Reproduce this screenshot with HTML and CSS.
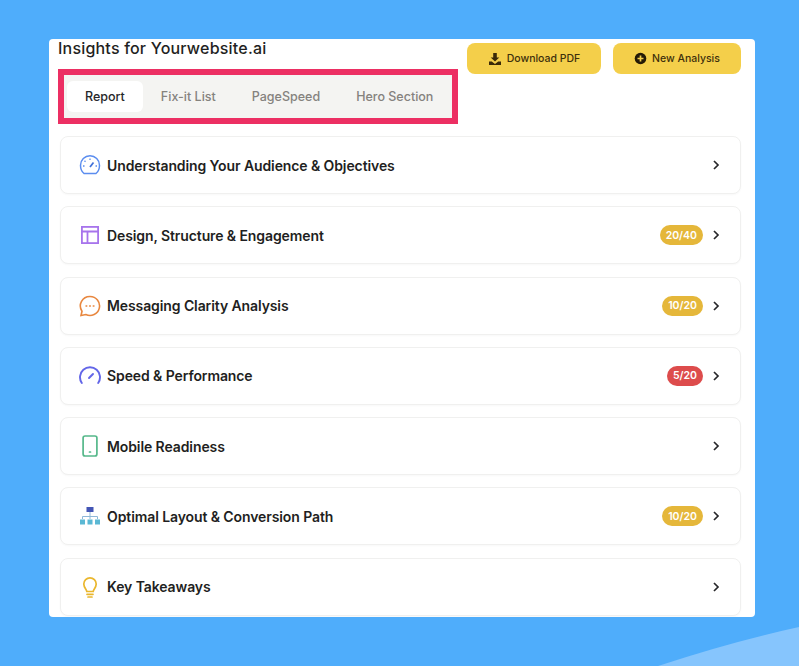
FILE: index.html
```html
<!DOCTYPE html>
<html lang="en">
<head>
<meta charset="utf-8">
<title>Insights for Yourwebsite.ai</title>
<link rel="stylesheet" href="styles.css">
</head>
<body>
<svg class="corner" width="799" height="666" viewBox="0 0 799 666" aria-hidden="true"><path d="M658 666 Q730 642 799 627 V666 Z" fill="#86c5fd"/></svg>
<main class="panel">
  <header class="top">
    <div class="top-left">
      <h1 class="title">Insights for Yourwebsite.ai</h1>
      <nav class="tabs">
        <span class="tab tab-active">Report</span>
        <span class="tab">Fix-it List</span>
        <span class="tab">PageSpeed</span>
        <span class="tab">Hero Section</span>
      </nav>
    </div>
    <div class="actions">
      <button class="btn btn-pdf">
        <svg width="14" height="14" viewBox="0 0 14 14"><path d="M5.2 1h3.6v4.4h2.5L7 9.6 2.700 5.400h2.500z" fill="#3a2a08"/><path d="M1 9.500h2.800L7 12l3.200-2.500H13V13H1z" fill="#3a2a08"/></svg>
        Download PDF
      </button>
      <button class="btn btn-new">
        <svg width="13" height="13" viewBox="0 0 13 13"><circle cx="6.500" cy="6.500" r="5.800" fill="#241a06"/><path d="M6.500 3.500v6M3.500 6.500h6" stroke="#f4cf4a" stroke-width="1.700"/></svg>
        New Analysis
      </button>
    </div>
  </header>
  <section class="rows">
    <article class="row">
      <svg class="icon" width="22" height="22" viewBox="0 0 22 22" fill="none" stroke="#5b8def" stroke-width="1.500"><path d="M5 19.500h12c2.200-1.800 3.500-4.600 3.500-8.300A9.500 9.500 0 0 0 1.500 11.200c0 3.700 1.300 6.500 3.500 8.300z"/><path d="M11 13l3.500-4.500" stroke="#3f6fd8" stroke-width="1.700"/><path d="M11 4.500v1.500M5.500 6.800l1 1M4 12h1.500M18 12h-1.500" stroke-width="1.300"/></svg>
      <h2 class="label">Understanding Your Audience &amp; Objectives</h2>
      <span class="trail"><svg class="chev" width="8" height="10" viewBox="0 0 8 10" fill="none" stroke="#27272a" stroke-width="1.700"><path d="M2 1l4 4-4 4"/></svg></span>
    </article>
    <article class="row">
      <svg class="icon" width="22" height="22" viewBox="0 0 22 22" fill="none" stroke="#a774ec" stroke-width="1.800"><rect x="2.900" y="2.900" width="16.200" height="16.200"/><path d="M2.900 7.500h16.200M8.500 7.500v11.600"/></svg>
      <h2 class="label">Design, Structure &amp; Engagement</h2>
      <span class="trail"><span class="badge badge-amber">20/40</span><svg class="chev" width="8" height="10" viewBox="0 0 8 10" fill="none" stroke="#27272a" stroke-width="1.700"><path d="M2 1l4 4-4 4"/></svg></span>
    </article>
    <article class="row">
      <svg class="icon" width="22" height="22" viewBox="0 0 22 22" fill="none" stroke="#e8873f" stroke-width="1.600"><path d="M11 1.500a9.500 9.500 0 1 1-4.200 18l-4.800 1 1-4.200A9.500 9.500 0 0 1 11 1.500z"/><path d="M7 11h.8M10.600 11h.8M14.200 11h.8" stroke-linecap="round" stroke-width="1.400"/></svg>
      <h2 class="label">Messaging Clarity Analysis</h2>
      <span class="trail"><span class="badge badge-amber">10/20</span><svg class="chev" width="8" height="10" viewBox="0 0 8 10" fill="none" stroke="#27272a" stroke-width="1.700"><path d="M2 1l4 4-4 4"/></svg></span>
    </article>
    <article class="row">
      <svg class="icon" width="22" height="22" viewBox="0 0 22 22" fill="none" stroke="#6366e8" stroke-width="1.900"><path d="M2.800 18A10 10 0 1 1 19.200 18" stroke-linecap="round"/><path d="M10 13l4-4" stroke-linecap="round"/></svg>
      <h2 class="label">Speed &amp; Performance</h2>
      <span class="trail"><span class="badge badge-red">5/20</span><svg class="chev" width="8" height="10" viewBox="0 0 8 10" fill="none" stroke="#27272a" stroke-width="1.700"><path d="M2 1l4 4-4 4"/></svg></span>
    </article>
    <article class="row">
      <svg class="icon" width="22" height="22" viewBox="0 0 22 22" fill="none" stroke="#55b88a" stroke-width="1.700"><rect x="4.100" y="1" width="13.800" height="20" rx="2"/><path d="M10.500 17h1" stroke-linecap="round"/></svg>
      <h2 class="label">Mobile Readiness</h2>
      <span class="trail"><svg class="chev" width="8" height="10" viewBox="0 0 8 10" fill="none" stroke="#27272a" stroke-width="1.700"><path d="M2 1l4 4-4 4"/></svg></span>
    </article>
    <article class="row">
      <svg class="icon" width="22" height="22" viewBox="0 0 22 22" fill="none"><rect x="7.500" y="2" width="7" height="5" fill="#4355b5"/><path d="M11 7v4M3.500 14v-2.500h15V14M11 11.500V14" stroke="#8fb8d8" stroke-width="1"/><rect x="1" y="14.500" width="5" height="5" fill="#5bb8d4"/><rect x="8.500" y="14.500" width="5" height="5" fill="#5bb8d4"/><rect x="16" y="14.500" width="5" height="5" fill="#5bb8d4"/></svg>
      <h2 class="label">Optimal Layout &amp; Conversion Path</h2>
      <span class="trail"><span class="badge badge-amber">10/20</span><svg class="chev" width="8" height="10" viewBox="0 0 8 10" fill="none" stroke="#27272a" stroke-width="1.700"><path d="M2 1l4 4-4 4"/></svg></span>
    </article>
    <article class="row">
      <svg class="icon" width="22" height="22" viewBox="0 0 22 22" fill="none" stroke="#eab72e" stroke-width="1.700"><path d="M7.800 15.500c0-2-3-3.700-3-7.500a6.200 6.200 0 0 1 12.400 0c0 3.800-3 5.500-3 7.500z"/><path d="M8 18.300h6M9 21h4" stroke-linecap="round"/></svg>
      <h2 class="label">Key Takeaways</h2>
      <span class="trail"><svg class="chev" width="8" height="10" viewBox="0 0 8 10" fill="none" stroke="#27272a" stroke-width="1.700"><path d="M2 1l4 4-4 4"/></svg></span>
    </article>
  </section>
</main>
</body>
</html>
```
FILE: styles.css
```css
* { box-sizing: border-box; }
html, body { margin: 0; height: 666px; overflow: hidden; }
body {
  background: #4fadfb;
  font-family: Inter, "Liberation Sans", sans-serif;
  padding: 39px 44px 0 49px;
}
.corner { position: absolute; left: 0; top: 0; }
.panel {
  position: relative;
  width: 706px;
  height: 578px;
  background: #fff;
  border-radius: 4px;
  padding: 0 14px 0 9px;
  overflow: hidden;
}
.top { display: flex; justify-content: space-between; align-items: flex-start; }
.top-left { display: flex; flex-direction: column; }
.title {
  margin: 0;
  font-size: 16px;
  line-height: 18px;
  font-weight: 500;
  color: #1f1f22;
  letter-spacing: 0.2px;
}
.tabs {
  margin-top: 12px;
  width: 400px;
  height: 55px;
  display: flex;
  align-items: center;
  padding: 0 3px;
  background: #f4f4f2;
  border: 6px solid #ec2f63;
  gap: 0;
}
.tab {
  padding: 0 18px;
  height: 31px;
  display: flex;
  align-items: center;
  font-size: 12.500px;
  font-weight: 500;
  color: #85827e;
  border-radius: 6px;
  white-space: nowrap;
}
.tab-active { background: #fff; color: #27272a; }
.actions { display: flex; gap: 12px; padding-top: 4px; }
.btn {
  height: 31px;
  border: 0;
  border-radius: 8px;
  background: #f4cf4a;
  color: #3e300c;
  font: 500 10.500px Inter, "Liberation Sans", sans-serif;
  display: flex;
  align-items: center;
  justify-content: center;
  gap: 5px;
  padding: 0;
}
.btn-pdf { width: 134px; }
.btn-new { width: 128px; }
.rows { display: flex; flex-direction: column; gap: 12.300px; margin-top: 12px; margin-left: 2px; }
.row {
  height: 58px;
  flex: none;
  display: flex;
  align-items: center;
  padding: 0 20px 0 18px;
  border: 1px solid #f0f0ef;
  border-radius: 8px;
  background: #fff;
  box-shadow: 0 1px 2px rgba(0, 0, 0, 0.03);
}
.icon { flex: none; margin-right: 6px; }
.label {
  margin: 0;
  font-size: 14px;
  font-weight: 600;
  color: #1f1f22;
  letter-spacing: -0.1px;
}
.trail { margin-left: auto; display: flex; align-items: center; gap: 9px; }
.badge {
  height: 20px;
  padding: 0 6px;
  border-radius: 10px;
  color: #fff;
  font-size: 10.500px;
  font-weight: 600;
  display: flex;
  align-items: center;
}
.badge-amber { background: #e5b73a; }
.badge-red { background: #dd4c4c; }
.chev { display: block; }
```
